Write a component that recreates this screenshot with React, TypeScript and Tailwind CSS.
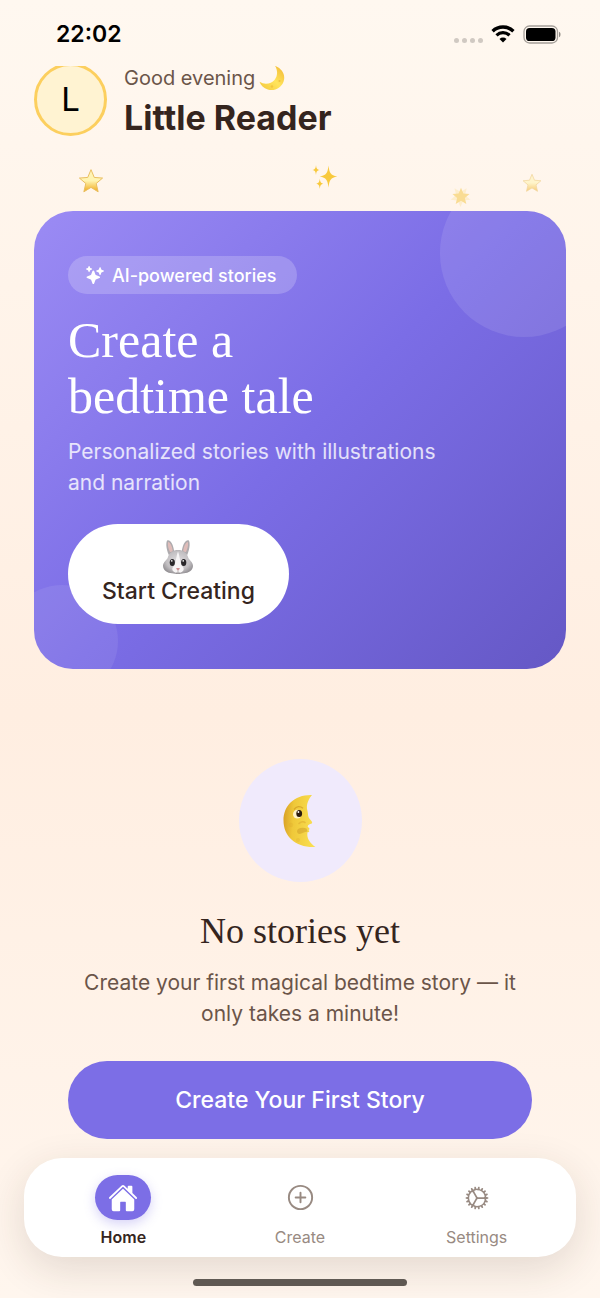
import { ReactNode } from "react";
import { IoAddCircleOutline, IoCogOutline, IoHome, IoSparkles } from "react-icons/io5";

const sans = "font-[Inter,'Liberation_Sans',sans-serif]";
const serif = "font-['Liberation_Serif',serif]";

const STAR =
  "M12 1.5l3 7.2 7.7.6-5.9 5 1.8 7.7L12 17.9 5.4 22l1.8-7.7-5.9-5 7.7-.6z";

function StatusBar() {
  return (
    <div className="flex h-[66px] items-center justify-between pt-0.5 pr-[38px] pl-14">
      <time className="text-[23px] leading-7 font-semibold text-black">22:02</time>
      <div className="flex items-center gap-2">
        <div className="flex gap-[3px] pt-3">
          {[0, 1, 2, 3].map((i) => (
            <span key={i} className="size-[5px] rounded-full bg-[#d0c9c2]" />
          ))}
        </div>
        <svg viewBox="0 0 24 18" className="h-[18px] w-6" fill="none" stroke="#000">
          <path d="M1.6 6.2a15 15 0 0 1 20.8 0" strokeWidth="3.4" />
          <path d="M5.5 10.3a9.4 9.4 0 0 1 13 0" strokeWidth="3.2" />
          <path d="M12 17.6l-3.5-3.7a5 5 0 0 1 7 0z" fill="#000" stroke="none" />
        </svg>
        <svg viewBox="0 0 39 19" className="h-[19px] w-[39px]">
          <rect x="1" y="1" width="33.5" height="17" rx="5.5" fill="none" stroke="#a59f99" strokeWidth="1.3" />
          <rect x="3" y="3" width="29.5" height="13" rx="3.6" fill="#000" />
          <path d="M36 6.8c2 .6 2 4.8 0 5.4z" fill="#8f8a85" />
        </svg>
      </div>
    </div>
  );
}

function CrescentMoon() {
  return (
    <svg viewBox="0 0 26 26" className="size-[26px]">
      <defs>
        <linearGradient id="crescent" x1="0" y1="1" x2="1" y2="0">
          <stop offset="0" stopColor="#f3c63a" />
          <stop offset=".5" stopColor="#ffe45c" />
          <stop offset="1" stopColor="#f2b632" />
        </linearGradient>
      </defs>
      <path
        d="M16 .8c7.2 2.700 10.800 9.300 8.600 15.600C22.300 23 15.300 26.400 8.800 24.400 4.800 23.200 1.600 20.300.5 16.800c5 3.200 11.600 2.300 15.200-2.100C18.900 10.700 18.700 5 16 .8z"
        fill="url(#crescent)"
      />
      <circle cx="20.500" cy="16" r="1" fill="#e6a828" opacity=".5" />
      <circle cx="13" cy="21.500" r="1.200" fill="#e6a828" opacity=".4" />
    </svg>
  );
}

function Star({ id, className }: { id: string; className: string }) {
  return (
    <svg viewBox="0 0 24 24" className={className}>
      <defs>
        <linearGradient id={id} x1="0" y1="0" x2="0" y2="1">
          <stop offset="0" stopColor="#fff3b8" />
          <stop offset=".5" stopColor="#fff4b0" />
          <stop offset="1" stopColor="#f0a818" />
        </linearGradient>
      </defs>
      <path d={STAR} fill={`url(#${id})`} stroke="#e8bd5e" strokeWidth=".9" strokeLinejoin="round" />
    </svg>
  );
}

function GlowingStar({ className }: { className: string }) {
  return (
    <svg viewBox="0 0 24 24" className={className}>
      <path d={STAR} transform="rotate(36 12 12)" fill="#fbdc7c" opacity=".5" />
      <path d="M12 3l2.600 6.200 6.700.6-5.100 4.400 1.600 6.600L12 17.300l-5.800 3.500 1.600-6.600-5.100-4.400 6.700-.6z" fill="#f5c84c" />
    </svg>
  );
}

function Sparkles({ className }: { className: string }) {
  return (
    <svg viewBox="0 0 26 26" className={className} fill="#f8c93c">
      <path d="M16.500 1.500c.9 7.500 2 9.600 8.800 11-6.800 1.400-7.900 3.500-8.800 11-.9-7.500-2-9.600-8.800-11 6.800-1.400 7.900-3.500 8.800-11z" />
      <path d="M4 1c.4 3.600 1 4.400 3.500 5C5 6.600 4.400 7.400 4 11 3.600 7.400 3 6.600.5 6 3 5.400 3.600 4.600 4 1z" />
      <path d="M7.800 14.500c.4 3.700 1 4.500 3.600 5.200-2.600.7-3.200 1.500-3.600 5.200-.4-3.700-1-4.500-3.600-5.200 2.600-.7 3.200-1.500 3.600-5.200z" />
    </svg>
  );
}

function Rabbit() {
  return (
    <svg viewBox="0 0 32 36" className="h-9 w-8">
      <defs>
        <radialGradient id="fur" cx=".5" cy=".45" r=".6">
          <stop offset="0" stopColor="#dedcde" />
          <stop offset=".65" stopColor="#c2bfc2" />
          <stop offset="1" stopColor="#8d8a8e" />
        </radialGradient>
      </defs>
      <path d="M6.800 16C3.800 9 3.800 3 5.400 1.200 8.800.4 12 6.500 12.300 14zM25.200 16c3-7 3-13 1.400-14.800C23.200.4 20 6.500 19.700 14z" fill="#aeabae" />
      <path d="M8 13C5.800 8.500 5.500 4.300 6.300 3c2 .3 4.200 5 4.500 9.500zM24 13c2.200-4.500 2.500-8.700 1.700-10-2 .3-4.200 5-4.500 9.500z" fill="#dfbcb9" />
      <path
        d="M16 11c5 0 8.800 2.500 10.200 7.500.7 2.400 5 4.800 4.800 8.500-.2 4.600-4.600 7-9 7.200-2 .1-4 .8-6 .8s-4-.7-6-.8c-4.400-.2-8.800-2.600-9-7.200-.2-3.700 4.100-6.100 4.800-8.500C7.200 13.500 11 11 16 11z"
        fill="url(#fur)"
      />
      <path d="M16 12.500c1.900 4.300 1.600 10.500 4.300 14.500 3.600 4-.3 7-4.300 7s-7.900-3-4.300-7c2.700-4 2.400-10.200 4.300-14.500z" fill="#f7f5f6" />
      <ellipse cx="10.300" cy="23.500" rx="2.600" ry="3.600" fill="#29272a" />
      <ellipse cx="21.700" cy="23.500" rx="2.600" ry="3.600" fill="#29272a" />
      <circle cx="9.800" cy="21.900" r=".8" fill="#fff" />
      <circle cx="21.200" cy="21.900" r=".8" fill="#fff" />
      <path d="M14 29.500c1.300-.6 2.700-.6 4 0l-2 2.300z" fill="#cf8f92" />
      <path d="M16 31.500v1.600m-2 .8c1 .4 1.700 0 2-.8.300.8 1 1.200 2 .8" fill="none" stroke="#8b8688" strokeWidth=".6" />
    </svg>
  );
}

function MoonFace() {
  return (
    <svg viewBox="0 0 34 54" className="h-[54px] w-[34px]">
      <defs>
        <linearGradient id="moonface" x1="0" y1=".4" x2="1" y2=".5">
          <stop offset="0" stopColor="#d9a126" />
          <stop offset=".3" stopColor="#efc839" />
          <stop offset="1" stopColor="#fae052" />
        </linearGradient>
      </defs>
      <path
        d="M29 1C11.500.5.500 11.500.500 26.500.500 42.500 13 54 32.500 53c-4-2.700-7.300-6.500-8-10.500-.3-1.800-.1-3.200 0-4.300.900.1 1.800-.3 1.800-1.200l-.9-1c1-.3 1.500-1.100.7-2l-1.300-1c-.2-1.200.3-2.200 1.400-2.600 1.500-.4 3-.7 3-1.900 0-1.300-2.400-2.800-3.500-5-.9-1.900-.5-3.800-1.200-6.500C22.500 10.500 26 4.500 29 1z"
        fill="url(#moonface)"
      />
      <path d="M14 37c.5-3.500 6.500-4 9.500-2.500l1 3c-3 .3-6 2.300-8 2.600-1.600-.4-2.600-1.600-2.500-3.100z" fill="#cf9f2a" opacity=".55" />
      <path d="M15.500 30c2.500-2.500 5-3 7-1" fill="none" stroke="#e0ae31" strokeWidth="1.500" opacity=".6" />
      <path d="M11 15.500c2.500-3.500 6-3.700 9-1.300" fill="none" stroke="#cf9a22" strokeWidth="1.300" opacity=".7" />
      <ellipse cx="14.300" cy="20.200" rx="4.300" ry="4.400" fill="#fff3c8" />
      <ellipse cx="16.200" cy="19.500" rx="2.900" ry="3.500" fill="#2b1a0d" />
      <circle cx="15.400" cy="18" r=".9" fill="#fff" />
      <circle cx="8" cy="31" r="2.200" fill="#dda92b" opacity=".25" />
      <circle cx="15" cy="46" r="2" fill="#dda92b" opacity=".25" />
    </svg>
  );
}

function HomeHeader() {
  return (
    <header className="-mt-[3px] flex h-[73px] items-start gap-[17px] px-[34px]">
      <div className="flex size-[73px] shrink-0 items-center justify-center rounded-full border-[3px] border-[#fccf5e] bg-[#fff3d2] text-[33px] text-black">
        L
      </div>
      <div>
        <p className="flex items-center gap-1 text-[20px] leading-[30px] text-[#6b5549]">
          Good evening <CrescentMoon />
        </p>
        <h1 className="mt-1 text-[34px] leading-[42px] font-bold text-[#35251e]">Little Reader</h1>
      </div>
    </header>
  );
}

function HeroCard() {
  return (
    <section className="relative overflow-hidden rounded-[39px] bg-[linear-gradient(135deg,#9b8bf4_0%,#7b6de6_50%,#6558c5_100%)] px-[34px] py-[45px]">
      <div className="absolute -top-[42px] -right-[42px] size-[168px] rounded-full bg-white/10" />
      <div className="absolute -bottom-7 -left-7 size-28 rounded-full bg-white/8" />
      <div className="relative flex flex-col items-start">
        <span className="flex h-[38px] items-center gap-2 rounded-full bg-white/20 pr-5 pl-[18px] text-[18px] font-medium text-white">
          <IoSparkles size={18} />
          AI-powered stories
        </span>
        <h2 className={`mt-[18px] text-[50px] leading-[56px] text-white ${serif}`}>
          Create a
          <br />
          bedtime tale
        </h2>
        <p className="mt-3 max-w-[390px] text-[21px] leading-[31px] text-white/80">
          Personalized stories with illustrations and narration
        </p>
        <button className="mt-[26px] flex h-[100px] flex-col items-center rounded-full bg-white px-[34px] pt-[15px] text-[23px] leading-8 font-medium text-[#35251e]">
          <Rabbit />
          Start Creating
        </button>
      </div>
    </section>
  );
}

function EmptyState() {
  return (
    <section className="mt-[90px] flex flex-col items-center px-[34px] text-center">
      <div className="flex size-[123px] items-center justify-center rounded-full bg-[#f0eafc]">
        <MoonFace />
      </div>
      <h2 className={`mt-7 text-[36px] leading-[42px] text-[#35251e] ${serif}`}>No stories yet</h2>
      <p className="mt-[15px] text-[21px] leading-[31px] text-[#6b5549]">
        Create your first magical bedtime story — it only takes a minute!
      </p>
      <button className="mt-8 h-[78px] w-full rounded-full bg-[#7c6ee6] text-[23px] font-medium text-white">
        Create Your First Story
      </button>
    </section>
  );
}

function Tab({ label, active, children }: { label: string; active?: boolean; children: ReactNode }) {
  return (
    <a
      href="#"
      aria-current={active ? "page" : undefined}
      className={`flex flex-1 flex-col items-center gap-1.5 text-base leading-[22px] ${
        active ? "font-semibold text-[#35251e]" : "text-[#988a82]"
      }`}
    >
      <span
        className={`flex h-[45px] w-14 items-center justify-center rounded-full ${
          active ? "bg-[#7c6ee6] text-white shadow-[0_4px_12px_rgba(124,110,230,0.3)]" : ""
        }`}
      >
        {children}
      </span>
      {label}
    </a>
  );
}

function TabBar() {
  return (
    <nav className="mx-6 mt-[19px] flex h-[99px] rounded-[38px] bg-white px-[11px] pt-[17px] shadow-[0_12px_40px_rgba(60,40,30,0.14)]">
      <Tab label="Home" active>
        <IoHome size={30} />
      </Tab>
      <Tab label="Create">
        <IoAddCircleOutline size={31} />
      </Tab>
      <Tab label="Settings">
        <IoCogOutline size={28} />
      </Tab>
    </nav>
  );
}

export default function App() {
  return (
    <div
      className={`flex min-h-screen flex-col overflow-hidden bg-[linear-gradient(180deg,#fff8f0_0%,#ffeee1_55%,#fff6ee_100%)] ${sans}`}
    >
      <StatusBar />
      <main className="overflow-hidden">
        <HomeHeader />
        <div className="relative mt-[75px] px-[34px]">
          {/* floating stars above the card */}
          <Star id="star-a" className="absolute -top-[43px] left-[13%] size-[26px]" />
          <Sparkles className="absolute -top-[47px] left-[52%] size-[26px]" />
          <GlowingStar className="absolute -top-[26px] left-[75%] size-[22px] opacity-55" />
          <Star id="star-b" className="absolute -top-[38px] left-[87%] size-5 opacity-55" />
          <HeroCard />
          <EmptyState />
        </div>
      </main>
      <TabBar />
      <div className="mx-auto mt-[22px] mb-3 h-[7px] w-[214px] rounded-full bg-[#5f5953]" />
    </div>
  );
}
